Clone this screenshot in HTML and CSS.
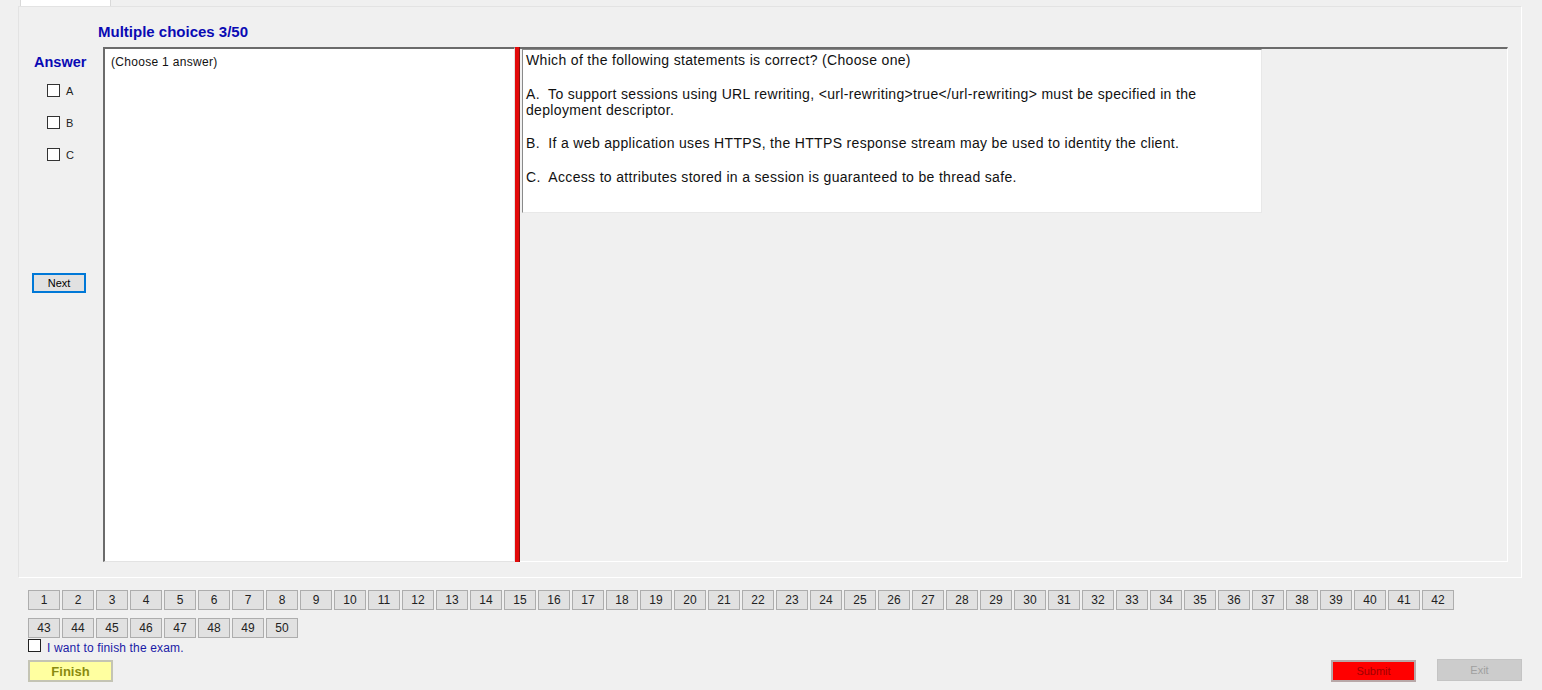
FILE: index.html
```html
<!DOCTYPE html>
<html>
<head>
<meta charset="utf-8">
<link rel="stylesheet" href="styles.css">
</head>
<body>
<div class="tabstrip"><div class="tab"></div></div>
<div class="tabpage">
  <div class="title">Multiple choices 3/50</div>
  <div class="main">
    <div class="sidebar">
      <div class="answer">Answer</div>
      <div class="opts">
        <label class="opt"><span class="cb"></span>A</label>
        <label class="opt"><span class="cb"></span>B</label>
        <label class="opt"><span class="cb"></span>C</label>
      </div>
      <button class="next">Next</button>
    </div>
    <div class="content">
      <div class="leftbox">(Choose 1 answer)</div>
      <div class="splitter"></div>
      <div class="rightpanel">
        <div class="question">
          <p>Which of the following statements is correct? (Choose one)</p>
          <p>A.&nbsp; To support sessions using URL rewriting, &lt;url-rewriting&gt;true&lt;/url-rewriting&gt; must be specified in the deployment descriptor.</p>
          <p>B.&nbsp; If a web application uses HTTPS, the HTTPS response stream may be used to identity the client.</p>
          <p>C.&nbsp; Access to attributes stored in a session is guaranteed to be thread safe.</p>
        </div>
      </div>
    </div>
  </div>
</div>
<div class="bottom">
  <div class="nums" id="nums"></div>
  <label class="finishchk"><span class="cb2"></span><span class="fl">I want to finish the exam.</span></label>
  <div class="actions">
    <button class="finish">Finish</button>
    <div class="spacer"></div>
    <button class="submit">Submit</button>
    <button class="exit">Exit</button>
  </div>
</div>
<script>
  var n = document.getElementById('nums');
  for (var i = 1; i <= 50; i++) {
    var b = document.createElement('button');
    b.className = 'num';
    b.textContent = i;
    n.appendChild(b);
  }
</script>
</body>
</html>
```
FILE: styles.css
```css
* { box-sizing: border-box; }
html, body { margin: 0; padding: 0; }
body {
  background: #f0f0f0;
  font-family: "Liberation Sans", Arial, sans-serif;
  width: 1542px;
  height: 690px;
  overflow: hidden;
  color: #000;
}
.tabstrip {
  height: 6px;
  background: #f0f0f0;
}
.tab {
  margin-left: 20px;
  width: 91px;
  height: 6px;
  background: #fff;
  border-right: 1px solid #d9d9d9;
  border-left: 1px solid #d9d9d9;
}
.tabpage {
  margin-left: 18px;
  width: 1504px;
  height: 572px;
  border: 1px solid #fff;
  border-top-color: #e3e3e3;
  border-left-color: #e3e3e3;
  display: flex;
  flex-direction: column;
}
.title {
  margin-top: 16px;
  padding-left: 79px;
  font-weight: bold;
  font-size: 15px;
  line-height: 17px;
  color: #0a0ab4;
  height: 24px;
}
.main {
  display: flex;
  height: 515px;
}
.sidebar {
  width: 84px;
  flex: none;
  display: flex;
  flex-direction: column;
}
.answer {
  margin-top: 7px;
  padding-left: 15px;
  font-weight: bold;
  font-size: 14.5px;
  line-height: 17px;
  color: #0a0ab4;
}
.opts {
  margin-top: 13px;
  padding-left: 28px;
  display: flex;
  flex-direction: column;
  gap: 19px;
}
.opt {
  display: flex;
  align-items: center;
  height: 13px;
  font-size: 11px;
  color: #222;
}
.cb {
  width: 13px;
  height: 13px;
  border: 1px solid #333;
  background: #fff;
  margin-right: 6px;
}
.next {
  margin-top: 112px;
  margin-left: 13px;
  width: 54px;
  height: 20px;
  border: 2px solid #0078d7;
  background: #e1e1e1;
  font-family: "Liberation Sans", Arial, sans-serif;
  font-size: 11px;
  padding: 0;
  color: #000;
}
.content {
  display: flex;
  width: 1405px;
  height: 515px;
}
.leftbox {
  width: 412px;
  height: 515px;
  background: #fff;
  border: 1px solid #e3e3e3;
  border-top: 2px solid #6b6b6b;
  border-left: 2px solid #6b6b6b;
  padding: 6px 0 0 6px;
  font-size: 12px;
  line-height: 14px;
  letter-spacing: 0.3px;
  color: #111;
}
.splitter {
  width: 5px;
  background: #e30b0b;
  border-right: 1px solid #8a1010;
}
.rightpanel {
  width: 988px;
  height: 515px;
  border-top: 2px solid #6b6b6b;
  border-right: 1px solid #fff;
  border-bottom: 1px solid #fff;
  padding-left: 2px;
}
.question {
  width: 740px;
  height: 164px;
  background: #fff;
  border: 1px solid #e8e8e8;
  border-left: 1px solid #8a8a8a;
  border-top: 1px solid #8a8a8a;
  padding: 2px 0 0 3px;
  font-size: 14px;
  line-height: 16px;
  letter-spacing: 0.33px;
  color: #111;
}
.question p {
  margin: 0 0 17.5px 0;
}
.bottom {
  padding-left: 28px;
  padding-top: 12px;
}
.nums {
  width: 1440px;
  display: flex;
  flex-wrap: wrap;
  gap: 8px 2px;
}
.num {
  width: 32px;
  height: 20px;
  padding: 0;
  background: #e1e1e1;
  border: 1px solid #adadad;
  font-family: "Liberation Sans", Arial, sans-serif;
  font-size: 12px;
  color: #222;
}
.finishchk {
  display: flex;
  align-items: flex-start;
  margin-top: 1px;
  height: 15px;
  font-size: 12px;
  letter-spacing: 0.15px;
  color: #1a1aa6;
}
.fl {
  padding-top: 2px;
  line-height: 14px;
}
.cb2 {
  width: 13px;
  height: 13px;
  border: 1px solid #222;
  background: #fff;
  margin-right: 6px;
}
.actions {
  display: flex;
  align-items: flex-start;
  margin-top: 6px;
  width: 1494px;
}
.spacer { flex: 1; }
.finish {
  width: 85px;
  height: 22px;
  background: #ffffa0;
  border: 2px solid #c4c4b4;
  font-family: "Liberation Sans", Arial, sans-serif;
  font-weight: bold;
  font-size: 13px;
  color: #8a8a10;
  padding: 0;
}
.submit {
  width: 85px;
  height: 22px;
  background: #ff0000;
  border: 2px solid #b8a8a8;
  font-family: "Liberation Sans", Arial, sans-serif;
  font-size: 11px;
  color: #a00000;
  padding: 0;
}
.exit {
  margin-left: 21px;
  margin-top: -1px;
  width: 85px;
  height: 22px;
  background: #cccccc;
  border: 1px solid #c4c4c4;
  font-family: "Liberation Sans", Arial, sans-serif;
  font-size: 11px;
  color: #a0a0a0;
  padding: 0;
}
```
